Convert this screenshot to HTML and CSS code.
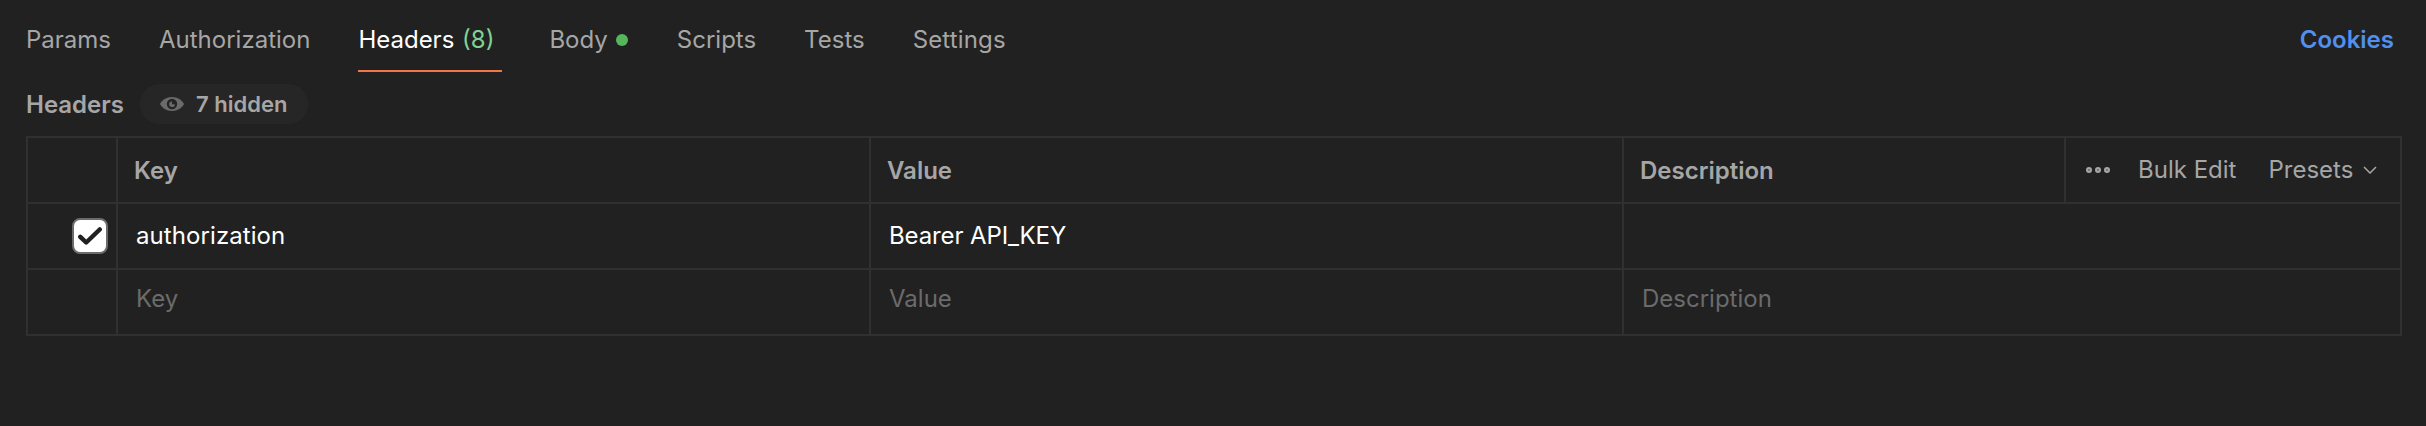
FILE: index.html
```html
<!DOCTYPE html>
<html lang="en">
<head>
<meta charset="utf-8">
<title>Request headers</title>
<link rel="stylesheet" href="styles.css">
</head>
<body>
<nav class="tabs">
  <a class="tab tab-params">Params</a>
  <a class="tab tab-auth">Authorization</a>
  <a class="tab tab-headers active">Headers <span class="count">(8)</span></a>
  <a class="tab tab-body">Body<span class="dot"></span></a>
  <a class="tab tab-scripts">Scripts</a>
  <a class="tab tab-tests">Tests</a>
  <a class="tab tab-settings">Settings</a>
  <a class="cookies">Cookies</a>
</nav>
<section class="subhead">
  <h2 class="title">Headers</h2>
  <button class="pill">
    <svg class="eye" viewBox="0 0 24 14" width="24" height="14"><path fill="#6b6b6b" fill-rule="evenodd" d="M12 0C6.500 0 2 3 0 7C2 11 6.500 14 12 14S22 11 24 7C22 3 17.500 0 12 0ZM12 1.800A5.200 5.200 0 1 1 12 12.200A5.200 5.200 0 0 1 12 1.800Z"/><path fill="#6b6b6b" d="M12 4.500V7.200H14.800A2.800 2.800 0 1 1 12 4.500Z"/></svg>
    <span>7 hidden</span>
  </button>
</section>
<div class="grid">
  <div class="row head">
    <div class="cell check"></div>
    <div class="cell">Key</div>
    <div class="cell">Value</div>
    <div class="cell last"><span class="label">Description</span>
      <div class="actions">
        <svg class="more" viewBox="0 0 24 6" width="24" height="6" fill="#666" stroke="#a6a6a6" stroke-width="2"><circle cx="3" cy="3" r="2"/><circle cx="12" cy="3" r="2"/><circle cx="21" cy="3" r="2"/></svg>
        <span class="bulk">Bulk Edit</span>
        <span class="presets">Presets</span>
        <svg class="chevron" viewBox="0 0 14 8" width="14" height="8" fill="none" stroke="#a6a6a6" stroke-width="1.500"><path d="M1 1L7 7L13 1"/></svg>
      </div>
    </div>
  </div>
  <div class="row data">
    <div class="cell check"><span class="box"><svg viewBox="0 0 24 18" width="24" height="18" fill="none" stroke="#212121" stroke-width="4.500" stroke-linecap="round" stroke-linejoin="round"><path d="M2.300 9.800L8.200 15.500L21.700 2.500"/></svg></span></div>
    <div class="cell name">authorization</div>
    <div class="cell value">Bearer API_KEY</div>
    <div class="cell last"></div>
  </div>
  <div class="row empty">
    <div class="cell check"></div>
    <div class="cell">Key</div>
    <div class="cell">Value</div>
    <div class="cell last">Description</div>
  </div>
</div>
</body>
</html>
```
FILE: styles.css
```css
* { box-sizing: border-box; }
body {
  margin: 0;
  height: 426px;
  padding: 0 24px 0 26px;
  background: #212121;
  color: #a6a6a6;
  font: 400 24px/32px Inter, sans-serif;
  overflow: hidden;
}
.tabs { display: flex; height: 72px; padding-right: 8px; }
.tab, .cookies { padding-top: 24px; height: 72px; white-space: nowrap; }
.tab { margin-right: 48px; }
.tab-headers { margin-right: 47px; }
.tab-body { margin-right: 49px; }
.tab-settings { letter-spacing: 0.15px; }
.active { color: #fff; width: 144px; border-bottom: 2px solid #f0764a; }
.count { margin-left: 1px; color: #7fd296; }
.dot {
  display: inline-block;
  width: 12px;
  height: 12px;
  margin-left: 8px;
  border-radius: 50%;
  background: #55b65c;
  vertical-align: 2px;
}
.cookies { margin-left: auto; color: #5190ee; font-weight: 600; }
.subhead { display: flex; align-items: center; height: 64px; }
.title { margin: 0; padding-top: 2px; font-size: 24px; font-weight: 600; line-height: 32px; }
.pill {
  display: flex;
  align-items: center;
  gap: 12px;
  width: 168px;
  height: 40px;
  margin-left: 16px;
  padding: 0 0 0 20px;
  border: 0;
  border-radius: 20px;
  background: #262626;
  color: #a6a6a6;
  font: 600 22px/32px Inter, sans-serif;
  white-space: nowrap;
}
.grid { width: 2376px; border: 2px solid #303030; }
.row { display: grid; grid-template-columns: 90px 753px 753px 776px; height: 66px; border-bottom: 2px solid #303030; }
.row:last-child { height: 64px; border-bottom: 0; }
.cell { display: flex; align-items: center; padding-left: 16px; border-right: 2px solid #303030; }
.cell.last { border-right: 0; }
.head .cell { padding-top: 2px; font-weight: 600; }
.head .cell.last { padding-top: 0; }
.label { padding-top: 2px; }
.data .cell, .empty .cell { padding-left: 18px; }
.data .cell { color: #fff; }
.data .name { letter-spacing: 0.08px; }
.data .value { letter-spacing: -0.12px; }
.empty .cell { color: #6b6b6b; padding-bottom: 6px; }
.data .check { justify-content: flex-end; padding: 0 8px 0 0; }
.box {
  display: flex;
  align-items: center;
  justify-content: center;
  width: 36px;
  height: 36px;
  border: 2px solid #6b6b6b;
  border-radius: 8px;
  background: #fff;
}
.actions {
  display: flex;
  align-items: center;
  width: 336px;
  height: 64px;
  margin-left: auto;
  padding-left: 20px;
  border-left: 2px solid #303030;
  font-weight: 400;
  white-space: nowrap;
}
.bulk { margin-left: 28px; }
.presets { margin-left: 32px; }
.chevron { margin-left: 10px; }
```
